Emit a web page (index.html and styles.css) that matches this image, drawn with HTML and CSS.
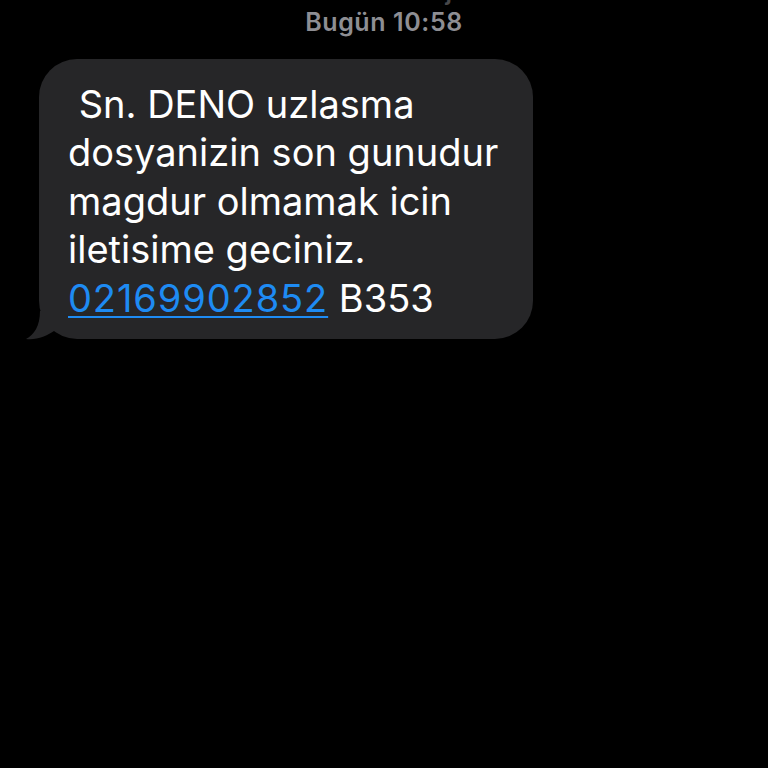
FILE: index.html
```html
<!DOCTYPE html>
<html lang="tr">

<head>
    <meta charset="UTF-8">
    <meta name="viewport" content="width=device-width, initial-scale=1.0">
    <title>Kısa Mesaj</title>
    <link rel="stylesheet" href="styles.css">
</head>

<body>
    <div class="head">
        <p class="service">Kısa Mesaj</p>
        <p class="date"><span class="day">Bugün</span> 10:58</p>
    </div>

    <div class="thread">
        <div class="bubble">
            <p class="text">&nbsp;Sn. DENO uzlasma<br>dosyanizin son gunudur<br>magdur olmamak icin<br>iletisime geciniz.<br><a href="tel:02169902852">02169902852</a> B353</p>
            <svg class="tail" viewBox="0 0 32 32" width="32" height="32">
                <path d="M16 3 C16 18 10 27 2 31 C12 32.5 23 28 30 23 L30 3 Z" fill="#262628" />
            </svg>
        </div>
    </div>
</body>

</html>
```

FILE: styles.css
```css
body {
    margin: 0;
    background-color: #000;
    color: #fff;
    font-family: Inter, "Noto Sans", sans-serif;
    height: 768px;
    overflow: hidden;
}

.head {
    text-align: center;
    color: #8e8e93;
    font-size: 25px;
    font-weight: 600;
    letter-spacing: 0.6px;
}

.head p {
    margin: 0;
}

.service {
    line-height: 20px;
    margin-top: -19px !important;
    opacity: 0.5;
}

.date {
    line-height: 30px;
    margin-top: 6px !important;
}

.thread {
    padding: 22px 0 0 39px;
}

.bubble {
    position: relative;
    width: 494px;
    box-sizing: border-box;
    background-color: #262628;
    border-radius: 38px;
    padding: 21px 20px 17px 29px;
}

.text {
    margin: 0;
    font-size: 38px;
    line-height: 48.4px;
    white-space: nowrap;
    position: relative;
    z-index: 1;
}

.text a {
    color: #1e8bf3;
    letter-spacing: 0.9px;
    text-decoration: underline;
    text-decoration-thickness: 2px;
    text-underline-offset: 4px;
}

.tail {
    position: absolute;
    left: -15px;
    bottom: -1px;
}
```
